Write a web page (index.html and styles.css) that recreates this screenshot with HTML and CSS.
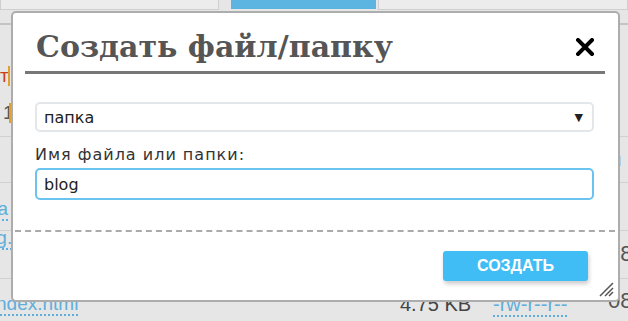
FILE: index.html
```
<!DOCTYPE html>
<html lang="ru">
<head>
  <meta charset="UTF-8" />
  <title>Файловый менеджер</title>
  <link rel="stylesheet" href="styles.css">
</head>
<body>
  <div class="page">
    <!-- Панель поиска (частично за краем) -->
    <div class="toolbar">
      <div class="search-field"></div>
      <div class="search-button">ИСКАТЬ</div>
      <div class="search-field wide"></div>
    </div>

    <!-- Список файлов -->
    <div class="files">
      <div class="row row-head">
        <div class="cell-left">
          <span class="mark red">т</span>
          <span class="mark num">1</span>
        </div>
      </div>
      <div class="row row-a">
        <div class="cell-left"></div>
        <div class="cell-right">Изм</div>
      </div>
      <div class="row row-b">
        <div class="cell-left"><a class="file-link">data</a></div>
      </div>
      <div class="row row-c">
        <div class="cell-left"><a class="file-link">blog.</a></div>
        <div class="cell-date">08</div>
      </div>
      <div class="row row-d">
        <div class="cell-left"><a class="file-link">ndex.html</a></div>
        <div class="cell-size">4.75 KB</div>
        <div class="cell-perm"><a class="file-link">-rw-r--r--</a></div>
        <div class="cell-date">08</div>
      </div>
    </div>
  </div>

  <!-- Диалог -->
  <div class="dialog">
    <div class="dialog-header">
      <h1 class="dialog-title">Создать файл/папку</h1>
      <svg class="close" width="18" height="18" viewBox="0 0 18 18">
        <path d="M2 2 L16 16 M16 2 L2 16" stroke="#000" stroke-width="4" stroke-linecap="square" />
      </svg>
    </div>

    <div class="dialog-body">
      <div class="select">
        <span>папка</span>
        <span class="arrow">▼</span>
      </div>
      <label class="label" for="name">Имя файла или папки:</label>
      <input class="input" id="name" type="text" value="blog">
    </div>

    <div class="dialog-footer">
      <button class="create-button">СОЗДАТЬ</button>
    </div>

    <svg class="resize" width="16" height="16" viewBox="0 0 16 16">
      <path d="M15 2 L2 15 M15 7 L7 15 M15 11 L11 15" stroke="#555" stroke-width="1.5" />
    </svg>
  </div>
</body>
</html>
```

FILE: styles.css
```
html, body {
  margin: 0;
  font-family: "Liberation Sans", Arial, sans-serif;
  overflow: hidden;
}

body {
  background-color: #e6e6e6;
  width: 628px;
  height: 321px;
  position: relative;
}

/* Фон: поиск и таблица */
.toolbar {
  display: flex;
  height: 24px;
  margin-top: -14px;
}

.search-field {
  width: 217px;
  height: 23px;
  background-color: #ececec;
  border: 1px solid #cfcfcf;
  border-top: none;
}

.search-field.wide {
  flex: 1;
  margin-left: 2px;
}

.search-button {
  width: 145px;
  height: 23px;
  margin-left: 12px;
  background-color: #5bb5e0;
  color: white;
  font-weight: bold;
  font-size: 15px;
  text-align: center;
  line-height: 12px;
}

.files {
  margin-top: 13px;
  border-top: 2px solid #c4c4c4;
  font-size: 19px;
  line-height: 20px;
  color: #444;
}

.row {
  display: flex;
  border-bottom: 1px solid #d0d0d0;
}

.row-head { height: 111px; }
.row-a { height: 45px; }
.row-b { height: 47px; }
.row-c { height: 47px; }
.row-d { height: 40px; border-bottom: none; font-size: 20px; }

.cell-left {
  width: 396px;
  margin-left: -4px;
}

.mark {
  display: block;
  width: 8px;
  margin-left: 4px;
  overflow: hidden;
  border-right: 2px solid #e0a030;
}

.mark.red {
  color: #c8401c;
  margin-top: 41px;
  margin-left: 4px;
}

.mark.num {
  margin-top: 17px;
  width: 6px;
  padding-left: 3px;
  color: #555;
}

.cell-right {
  margin-left: auto;
  padding-top: 13px;
  width: 30px;
  overflow: hidden;
  text-indent: -12px;
}

.row-b .cell-left { padding-top: 16px; margin-left: -29px; }
.row-c .cell-left { margin-top: -3px; margin-left: -29px; width: 421px; }
.row-d .cell-left { padding-top: 15px; width: 404px; font-size: 19px; }

.file-link {
  color: #5faedb;
  border-bottom: 2px dotted #5faedb;
}

.cell-size {
  padding-top: 15px;
  width: 93px;
}

.cell-perm {
  padding-top: 15px;
}

.cell-date {
  margin-left: auto;
  width: 20px;
  font-size: 22px;
  line-height: 24px;
  padding-top: 10px;
  color: #555;
}

.row-c .cell-date { padding-top: 11px; }

/* Диалог */
.dialog {
  position: absolute;
  left: 11px;
  top: 11px;
  width: 605px;
  height: 287px;
  background-color: white;
  border: 2px solid #adadad;
  border-radius: 5px;
  display: flex;
  flex-direction: column;
}

.dialog-header {
  display: flex;
  align-items: center;
  justify-content: space-between;
  margin: 0 13px 0 12px;
  padding: 16px 11px 6px 11px;
  border-bottom: 3px solid #777;
}

.dialog-title {
  margin: 0;
  font-family: "DejaVu Serif", Georgia, serif;
  font-weight: bold;
  font-size: 30px;
  color: #555;
  line-height: 36px;
}

.dialog-body {
  display: flex;
  flex-direction: column;
  margin: 0 3px 0 2px;
  padding: 28px 21px 30px 20px;
  border-bottom: 2px dashed #aaa;
  font-family: "DejaVu Sans", Verdana, sans-serif;
  font-size: 16px;
}

.select {
  display: flex;
  justify-content: space-between;
  align-items: center;
  box-sizing: border-box;
  height: 30px;
  padding: 0 7px;
  border: 2px solid #e3e7ea;
  border-radius: 5px;
  color: #222;
}

.arrow {
  font-size: 11px;
  margin-right: 2px;
}

.label {
  margin-top: 13px;
  margin-bottom: 4px;
  color: #333;
  letter-spacing: 1px;
}

.input {
  box-sizing: border-box;
  height: 32px;
  padding: 0 7px;
  border: 2px solid #6bc4ef;
  border-radius: 5px;
  font-family: "DejaVu Sans", Verdana, sans-serif;
  font-size: 16px;
  color: #222;
  outline: none;
}

.dialog-footer {
  display: flex;
  justify-content: flex-end;
  padding: 19px 30px 0 0;
}

.create-button {
  width: 145px;
  height: 30px;
  background-color: #3fbdf4;
  color: white;
  border: none;
  border-radius: 3px;
  font-family: "Liberation Sans", Arial, sans-serif;
  font-weight: bold;
  font-size: 16px;
  box-shadow: 1px 3px 4px rgba(0, 0, 0, 0.2);
}

.resize {
  position: absolute;
  right: 4px;
  bottom: 3px;
}
```
